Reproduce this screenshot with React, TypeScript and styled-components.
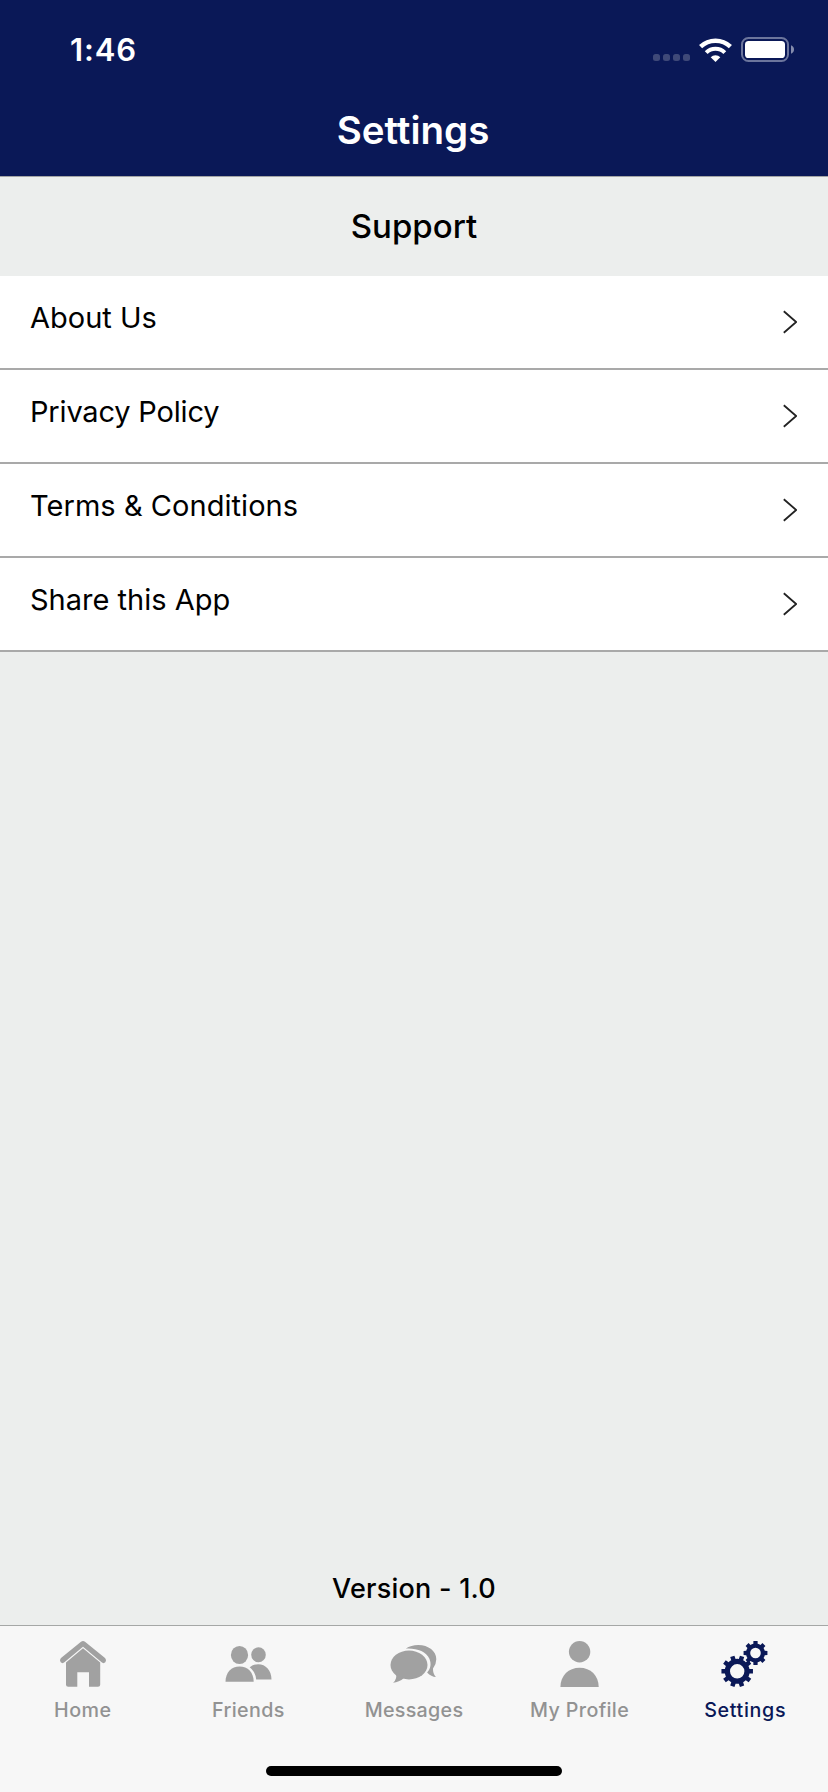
import React from "react";
import styled, { createGlobalStyle } from "styled-components";

const navy = "#0a1857";

const GlobalStyle = createGlobalStyle`
  * { box-sizing: border-box; }
  body {
    margin: 0;
    background: #eceeed;
    font-family: Inter, "Liberation Sans", sans-serif;
    font-variant-ligatures: none;
    color: #000;
  }
`;

const Screen = styled.div`
  width: 828px;
  height: 1792px;
  display: flex;
  flex-direction: column;
  background: #eceeed;
  overflow: hidden;
`;

const Header = styled.header`
  height: 177px;
  flex: none;
  background: ${navy};
  border-bottom: 1px solid #a3a4a5;
  color: #fff;
`;

const StatusBar = styled.div`
  height: 88px;
  padding: 11px 34px 0 70px;
  display: flex;
  align-items: center;
  justify-content: space-between;
`;

const Time = styled.span`
  font-size: 31px;
  font-weight: 600;
  letter-spacing: 0.9px;
  line-height: 40px;
`;

const StatusIcons = styled.div`
  display: flex;
  align-items: center;

  svg {
    display: block;
  }
`;

const SignalDots = styled.div`
  display: flex;
  gap: 3px;
  margin: 16px 9px 0 0;
`;

const Dot = styled.i`
  width: 7px;
  height: 7px;
  border-radius: 2.5px;
  background: #3f4978;
`;

const NavTitle = styled.h1`
  margin: 0;
  padding-top: 20px;
  text-align: center;
  font-size: 38.5px;
  font-weight: 600;
  line-height: 44px;
  text-indent: -2px;
`;

const SectionTitle = styled.h2`
  margin: 0;
  height: 99px;
  flex: none;
  text-align: center;
  font-size: 33px;
  font-weight: 500;
  line-height: 98px;
`;

const List = styled.ul`
  margin: 0;
  padding: 0;
  list-style: none;
  background: #fff;
`;

const Row = styled.li`
  height: 94px;
  padding: 0 31px 0 30px;
  display: flex;
  align-items: center;
  justify-content: space-between;
  border-bottom: 2px solid #a9a9a9;
`;

const RowLabel = styled.span<{ $tracking?: number }>`
  padding-bottom: 8px;
  font-size: 29px;
  line-height: 40px;
  letter-spacing: ${(p) => p.$tracking ?? 0}px;
`;

const Version = styled.p`
  margin: auto 0 16px;
  text-align: center;
  font-size: 27px;
  font-weight: 500;
  line-height: 40px;
  letter-spacing: 0.23px;
`;

const Footer = styled.footer`
  height: 167px;
  flex: none;
  display: flex;
  flex-direction: column;
  align-items: center;
  justify-content: space-between;
  background: #f7f7f7;
  border-top: 1px solid #a5a7a6;
  padding-bottom: 16px;
`;

const Tabs = styled.nav`
  width: 100%;
  display: grid;
  grid-template-columns: repeat(5, 1fr);
`;

const Tab = styled.a<{ $active?: boolean }>`
  display: flex;
  flex-direction: column;
  align-items: center;
  padding-top: 15px;
  color: ${(p) => (p.$active ? navy : "#929292")};

  svg {
    display: block;
    fill: ${(p) => (p.$active ? navy : "#a1a1a1")};
  }
`;

const TabLabel = styled.span<{ $tracking: number }>`
  margin-top: 11px;
  font-size: 19.7px;
  font-weight: 500;
  line-height: 24px;
  letter-spacing: ${(p) => p.$tracking}px;
`;

const HomeIndicator = styled.div`
  width: 296px;
  height: 10px;
  border-radius: 5px;
  background: #000;
`;

const TabIcon = ({ children }: { children: React.ReactNode }) => (
  <svg width="46" height="46" viewBox="0 0 46 46" overflow="visible">
    {children}
  </svg>
);

function gear(cx: number, cy: number, teeth: number, root: number, outer: number, hole: number, start: number, rootHalf: number, tipHalf: number) {
  const at = (r: number, deg: number) => {
    const a = (deg * Math.PI) / 180;
    return `${(cx + r * Math.sin(a)).toFixed(2)} ${(cy - r * Math.cos(a)).toFixed(2)}`;
  };
  let d = "";
  for (let i = 0; i < teeth; i++) {
    const a = start + (i * 360) / teeth;
    d += i === 0 ? `M${at(root, a - rootHalf)}` : `A${root} ${root} 0 0 1 ${at(root, a - rootHalf)}`;
    d += `L${at(outer, a - tipHalf)}L${at(outer, a + tipHalf)}L${at(root, a + rootHalf)}`;
  }
  d += `A${root} ${root} 0 0 1 ${at(root, start - rootHalf)}Z`;
  d += `M${cx - hole} ${cy}a${hole} ${hole} 0 1 0 ${hole * 2} 0a${hole} ${hole} 0 1 0 ${-hole * 2} 0Z`;
  return d;
}

const HomeIcon = () => (
  <TabIcon>
    <path d="M21 .8Q23 -.7 25 .8L45 17Q46 18 46 19.6Q45.8 22 43.6 22.2Q42.4 22 41.3 21L23 5.7L4.7 21Q3.6 22 2.4 22.2Q.2 22 0 19.6Q0 18 1 17Z" />
    <path d="M23 7.2L40.2 21.5V43.7Q40.2 45.8 38 45.8H29V31.2H17.3V45.8H8.2Q6 45.8 6 43.7V21.5Z" />
  </TabIcon>
);

const FriendsIcon = () => (
  <TabIcon>
    <ellipse cx="14.5" cy="14" rx="8.6" ry="9.1" />
    <ellipse cx="33.5" cy="13.8" rx="7.3" ry="7.5" />
    <path d="M.5 40.8C.5 31.5 6.5 25.6 14.6 25.6S28.7 31.5 28.7 40.8Z" />
    <path d="M24.7 26.3Q28.5 23.2 33.1 23.2C40.8 23.2 46.5 29.5 46.5 38.4H31.2Q30.4 30.8 24.7 26.3Z" />
  </TabIcon>
);

const MessagesIcon = () => (
  <TabIcon>
    <ellipse cx="18" cy="24" rx="18.5" ry="14.4" />
    <path d="M5.3 31Q6.3 38.5 2.1 41.7Q8 41.3 13 37Z" />
    <path d="M14.8 7.6Q20 4 27.2 4C37.5 4 45.3 10.2 45.3 18.2Q45.3 23.2 42 27.5Q41.8 32.8 44.9 36.1Q40.3 35.7 36.1 31.4C39.8 27.8 40.5 22.6 38.3 17.4C35.1 10.6 26 7 14.8 7.6Z" />
  </TabIcon>
);

const ProfileIcon = () => (
  <TabIcon>
    <circle cx="22.6" cy="10.7" r="10.7" />
    <path d="M3.4 46C3.4 34.5 11.6 26.7 22.6 26.7S41.7 34.5 41.7 46Z" />
  </TabIcon>
);

const GearsIcon = () => (
  <TabIcon>
    <path fillRule="evenodd" d={gear(15.2, 30.3, 10, 12.5, 15.9, 7.2, 18, 10.5, 8)} />
    <path fillRule="evenodd" d={gear(33.5, 12, 8, 9.5, 12.1, 5.3, 0, 13, 10)} />
  </TabIcon>
);

const Chevron = () => (
  <svg width="14" height="24" viewBox="0 0 14 24" fill="none" stroke="#222" strokeWidth="1.8">
    <path d="M.8 1.2L13.2 12L.8 22.8" />
  </svg>
);

const WifiIcon = () => (
  <svg width="33" height="24" viewBox="0 0 33 24" fill="none" stroke="#fff">
    <path strokeWidth="4.5" d="M1.6 8.7A21.6 21.6 0 0 1 31.4 8.7" />
    <path strokeWidth="4.1" d="M7.2 14.6A13.3 13.3 0 0 1 25.8 14.6" />
    <path fill="#fff" stroke="none" d="M16.5 24L11.7 19.2A6.7 6.7 0 0 1 21.3 19.2Z" />
  </svg>
);

const BatteryIcon = () => (
  <svg width="53" height="25" viewBox="0 0 53 25">
    <rect x="1" y="1" width="46" height="23" rx="6.5" fill="none" stroke="#6c759c" strokeWidth="2" />
    <rect x="4" y="4" width="40" height="17" rx="3.6" fill="#fff" />
    <path d="M50 8.3Q53 9.5 53 12.5T50 16.7Z" fill="#858cad" />
  </svg>
);

const StatusGap = styled.span`
  width: 9px;
`;

const rows = [
  { label: "About Us" },
  { label: "Privacy Policy", tracking: -0.18 },
  { label: "Terms & Conditions", tracking: 0.05 },
  { label: "Share this App" },
];

const tabs = [
  { label: "Home", Icon: HomeIcon, tracking: 0.5 },
  { label: "Friends", Icon: FriendsIcon, tracking: 0.4 },
  { label: "Messages", Icon: MessagesIcon, tracking: 0.3 },
  { label: "My Profile", Icon: ProfileIcon, tracking: 0.35 },
  { label: "Settings", Icon: GearsIcon, tracking: 0.65, active: true },
];

export default function App() {
  return (
    <Screen>
      <GlobalStyle />
      <Header>
        <StatusBar>
          <Time>1:46</Time>
          <StatusIcons>
            <SignalDots>
              <Dot />
              <Dot />
              <Dot />
              <Dot />
            </SignalDots>
            <WifiIcon />
            <StatusGap />
            <BatteryIcon />
          </StatusIcons>
        </StatusBar>
        <NavTitle>Settings</NavTitle>
      </Header>
      <SectionTitle>Support</SectionTitle>
      <List>
        {rows.map((row) => (
          <Row key={row.label}>
            <RowLabel $tracking={row.tracking}>{row.label}</RowLabel>
            <Chevron />
          </Row>
        ))}
      </List>
      <Version>Version - 1.0</Version>
      <Footer>
        <Tabs>
          {tabs.map(({ label, Icon, tracking, active }) => (
            <Tab key={label} $active={active}>
              <Icon />
              <TabLabel $tracking={tracking}>{label}</TabLabel>
            </Tab>
          ))}
        </Tabs>
        <HomeIndicator />
      </Footer>
    </Screen>
  );
}
